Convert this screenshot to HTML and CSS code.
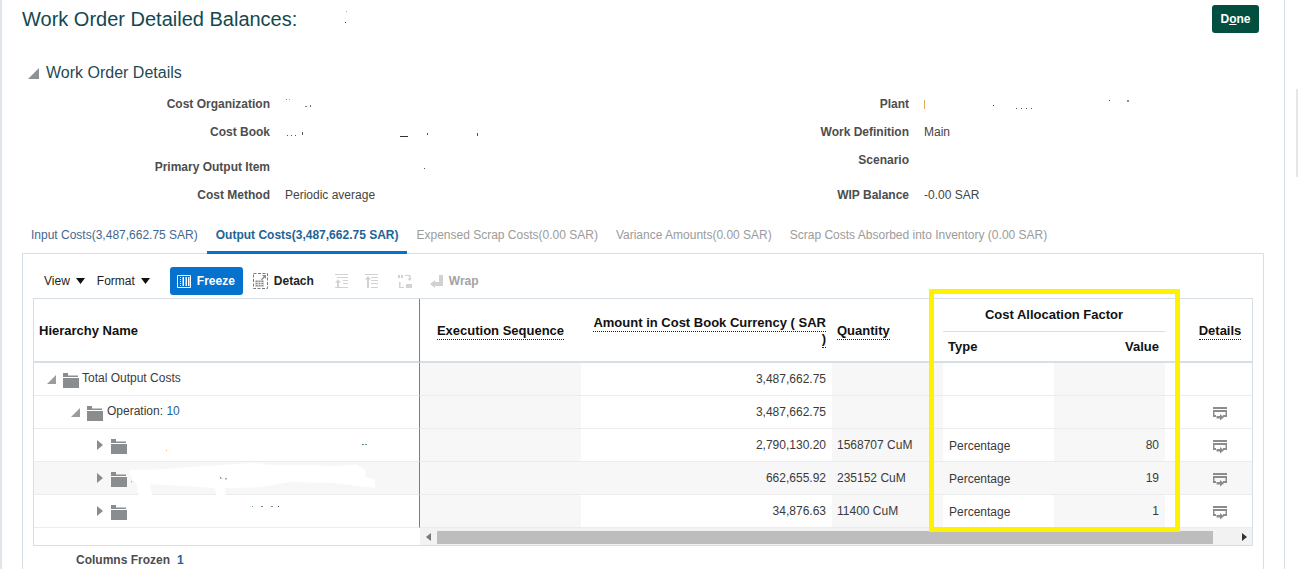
FILE: index.html
```html
<!DOCTYPE html>
<html lang="en">
<head>
<meta charset="utf-8">
<title>Work Order Detailed Balances</title>
<link rel="stylesheet" href="styles.css">
</head>
<body>
<div class="layout">
  <main class="frame">
    <header class="page-head">
      <h1 class="title">Work Order Detailed Balances:<svg class="specks-title" width="4" height="16" viewBox="0 0 4 16"><rect x="2" y="0" width="1" height="1" fill="#c9b36a"/><rect x="1" y="11" width="1" height="1" fill="#445"/></svg></h1>
      <button class="done" type="button">D<u>o</u>ne</button>
    </header>

    <h2 class="section"><svg class="section-tri" width="11" height="11" viewBox="0 0 11 11"><path d="M11 0V11H0Z"/></svg>Work Order Details</h2>

    <section class="form">
      <div class="form-col form-left">
        <div class="row"><span class="label">Cost Organization</span><span class="value"><svg class="speck" width="30" height="12" viewBox="0 0 30 12"><rect x="1" y="1" width="1" height="1" fill="#778"/><rect x="4" y="1" width="1" height="1" fill="#99a"/><rect x="20" y="8" width="2" height="1" fill="#778"/><rect x="25" y="7" width="1" height="2" fill="#667"/></svg></span></div>
        <div class="row"><span class="label">Cost Book</span><span class="value"><svg class="speck" width="200" height="12" viewBox="0 0 200 12"><rect x="2" y="9" width="1" height="1" fill="#556"/><rect x="6" y="9" width="1" height="1" fill="#556"/><rect x="10" y="9" width="1" height="1" fill="#556"/><rect x="17" y="6" width="1" height="3" fill="#556"/><rect x="115" y="10" width="8" height="1" fill="#333"/><rect x="142" y="7" width="1" height="2" fill="#556"/><rect x="192" y="7" width="1" height="3" fill="#357"/></svg></span></div>
        <div class="row row-low"><span class="label">Primary Output Item</span><span class="value"><svg class="speck" width="145" height="12" viewBox="0 0 145 12"><rect x="139" y="7" width="1" height="1" fill="#556"/></svg></span></div>
        <div class="row"><span class="label">Cost Method</span><span class="value">Periodic average</span></div>
      </div>
      <div class="form-col form-right">
        <div class="row"><span class="label">Plant</span><span class="value"><svg class="speck" width="210" height="12" viewBox="0 0 210 12"><rect x="0" y="1" width="1" height="9" fill="#e2a85c"/><rect x="69" y="6" width="1" height="1" fill="#445"/><rect x="92" y="9" width="1" height="1" fill="#556"/><rect x="97" y="9" width="1" height="1" fill="#556"/><rect x="102" y="9" width="1" height="1" fill="#556"/><rect x="107" y="9" width="1" height="1" fill="#556"/><rect x="185" y="1" width="1" height="1" fill="#556"/><rect x="203" y="1" width="2" height="2" fill="#69a"/></svg></span></div>
        <div class="row"><span class="label">Work Definition</span><span class="value">Main</span></div>
        <div class="row row-high"><span class="label">Scenario</span><span class="value"></span></div>
        <div class="row"><span class="label">WIP Balance</span><span class="value">-0.00 SAR</span></div>
      </div>
    </section>

    <nav class="tabs">
      <a class="tab tab-link">Input Costs(3,487,662.75 SAR)</a>
      <a class="tab tab-active">Output Costs(3,487,662.75 SAR)</a>
      <a class="tab">Expensed Scrap Costs(0.00 SAR)</a>
      <a class="tab">Variance Amounts(0.00 SAR)</a>
      <a class="tab">Scrap Costs Absorbed into Inventory (0.00 SAR)</a>
    </nav>

    <section class="panel">
      <div class="toolbar">
        <span class="menu">View<svg class="caret" width="9" height="6" viewBox="0 0 9 6"><path d="M0 0H9L4.500 6Z"/></svg></span>
        <span class="menu menu-format">Format<svg class="caret" width="9" height="6" viewBox="0 0 9 6"><path d="M0 0H9L4.500 6Z"/></svg></span>
        <button class="freeze" type="button">
          <svg width="14" height="13" viewBox="0 0 14 13"><path fill="none" stroke="#fff" d="M.5.500h13v12H.5z"/><path fill="#fff" d="M3 2h1v1H3zM3 4h1v1H3zM3 6h1v1H3zM3 8h1v1H3zM3 10h1v1H3zM5.500 2h1.500v9H5.500zM8.500 2H10v9H8.500zM11 2h1.500v9H11z"/></svg>
          Freeze
        </button>
        <span class="tool tool-detach">
          <svg width="15" height="16" viewBox="0 0 15 16"><path fill="none" stroke="#77797c" stroke-dasharray="3 1.500" d="M.5.500h14v15H.5z"/><path fill="#8a8d90" d="M2.500 7.500h8v6h-8zM9 2h4v4l-1.300-1.500L9 7.200 8 6.200l2.600-2.700z"/><path stroke="#fff" stroke-width=".7" d="M2.500 9.500h8M2.500 11.500h8M5.200 7.500v6M7.900 7.500v6"/></svg>
          Detach
        </span>
        <svg class="dis dis-1" width="13" height="15" viewBox="0 0 13 15"><path fill="#d0d2d4" d="M0 0h13v1H0zM2 3h11v1H2zM8 6h5v1H8zM8 9h5v1H8zM0 13h13v1H0zM3 5.500l3 3H4V13H2V8.500H0z"/></svg>
        <svg class="dis dis-2" width="13" height="15" viewBox="0 0 13 15"><path fill="#d0d2d4" d="M0 0h13v1H0zM6 3h7v1H6zM6 6h7v1H6zM6 9h7v1H6zM6 13h7v1H6zM3 2l3 3.500H4V14H2V5.500H0z"/></svg>
        <svg class="dis dis-3" width="14" height="15" viewBox="0 0 14 15"><path fill="#d0d2d4" d="M0 1h2v3H0zM3 1h2v3H3zM7 1h5v1H7zM11 1h1.500v5H11zM9.500 4.500h4.500L11.700 7zM1 8h1.500v6H1zM1 13h5v1H1zM8 10h6v4H8z"/></svg>
        <svg class="dis dis-4" width="13" height="13" viewBox="0 0 13 13"><path fill="#cfd1d3" d="M9 0h4v11H5v2L0 9l5-4v2h4z"/></svg>
        <span class="tool-wrap">Wrap</span>
      </div>

      <div class="table-area">
        <div class="table-box">
          <table class="grid">
            <colgroup>
              <col class="c-name"><col class="c-seq"><col class="c-amt"><col class="c-qty"><col class="c-type"><col class="c-val"><col class="c-det">
            </colgroup>
            <thead>
              <tr>
                <th rowspan="2" class="h-name frozen">Hierarchy Name</th>
                <th rowspan="2" class="h-center"><span class="dotted">Execution Sequence</span></th>
                <th rowspan="2" class="h-right h-amt"><span class="dotted">Amount in Cost Book Currency ( SAR )</span></th>
                <th rowspan="2" class="h-left"><span class="dotted">Quantity</span></th>
                <th colspan="2" class="h-group">Cost Allocation Factor</th>
                <th rowspan="2" class="h-center"><span class="dotted">Details</span></th>
              </tr>
              <tr>
                <th class="h-left h-sub">Type</th>
                <th class="h-right h-sub">Value</th>
              </tr>
            </thead>
            <tbody>
              <tr>
                <td class="frozen"><div class="tree l1"><svg class="tri-open" width="9" height="9" viewBox="0 0 9 9"><path d="M9 0V9H0Z"/></svg><svg class="folder" width="16" height="15" viewBox="0 0 16 15"><path d="M0 0h5v2.500h10V4H0zM0 5h16v10H0z"/></svg><span>Total Output Costs</span></div></td>
                <td class="shade"></td><td class="num">3,487,662.75</td><td class="shade"></td><td></td><td class="shade"></td><td></td>
              </tr>
              <tr>
                <td class="frozen"><div class="tree l2"><svg class="tri-open" width="9" height="9" viewBox="0 0 9 9"><path d="M9 0V9H0Z"/></svg><svg class="folder" width="16" height="15" viewBox="0 0 16 15"><path d="M0 0h5v2.500h10V4H0zM0 5h16v10H0z"/></svg><span>Operation: <b class="link">10</b></span></div></td>
                <td class="shade"></td><td class="num">3,487,662.75</td><td class="shade"></td><td></td><td class="shade"></td>
                <td class="det"><svg class="det-ico" width="14" height="14" viewBox="0 0 14 14"><path d="M0 0h14v2H0zM0 3h14v7H10V8h2.500V5h-11v3H3v2H0z"/><path d="M3.500 9h3.500V7l4 3.300-4 3.300v-2H3.500z"/></svg></td>
              </tr>
              <tr>
                <td class="frozen"><div class="tree l3"><svg class="tri-closed" width="6" height="10" viewBox="0 0 6 10"><path d="M0 0L6 5L0 10Z"/></svg><svg class="folder" width="16" height="15" viewBox="0 0 16 15"><path d="M0 0h5v2.500h10V4H0zM0 5h16v10H0z"/></svg><svg class="specks-row" width="240" height="33" viewBox="0 0 240 33"><rect x="36" y="21" width="1" height="1" fill="#f0b070"/><rect x="232" y="15" width="2" height="1" fill="#778"/><rect x="235" y="15" width="2" height="1" fill="#69a"/></svg></div></td>
                <td class="shade"></td><td class="num">2,790,130.20</td><td class="shade txt">1568707 CuM</td><td class="txt-type">Percentage</td><td class="shade num">80</td>
                <td class="det"><svg class="det-ico" width="14" height="14" viewBox="0 0 14 14"><path d="M0 0h14v2H0zM0 3h14v7H10V8h2.500V5h-11v3H3v2H0z"/><path d="M3.500 9h3.500V7l4 3.300-4 3.300v-2H3.500z"/></svg></td>
              </tr>
              <tr class="alt">
                <td class="frozen"><div class="tree l3"><svg class="tri-closed" width="6" height="10" viewBox="0 0 6 10"><path d="M0 0L6 5L0 10Z"/></svg><svg class="folder" width="16" height="15" viewBox="0 0 16 15"><path d="M0 0h5v2.500h10V4H0zM0 5h16v10H0z"/></svg></div>
                  <svg class="blob" width="246" height="36" viewBox="90 62 738 108"><path fill="#fff" d="M90 85 160 85 300 75 460 65 520 72 640 72 700 75 770 70 795 85 797 108 825 115 825 140 700 125 570 122 480 138 375 140 378 165 350 165 345 140 150 128 157 165 115 165 110 130 90 100Z"/><rect x="93" y="120" width="3" height="3" fill="#c8901e"/><rect x="360" y="108" width="3" height="3" fill="#503070"/><rect x="364" y="110" width="3" height="3" fill="#9bc"/><rect x="375" y="111" width="6" height="3" fill="#689"/></svg>
                </td>
                <td></td><td class="num">662,655.92</td><td class="txt">235152 CuM</td><td class="txt-type">Percentage</td><td class="num">19</td>
                <td class="det"><svg class="det-ico" width="14" height="14" viewBox="0 0 14 14"><path d="M0 0h14v2H0zM0 3h14v7H10V8h2.500V5h-11v3H3v2H0z"/><path d="M3.500 9h3.500V7l4 3.300-4 3.300v-2H3.500z"/></svg></td>
              </tr>
              <tr>
                <td class="frozen"><div class="tree l3"><svg class="tri-closed" width="6" height="10" viewBox="0 0 6 10"><path d="M0 0L6 5L0 10Z"/></svg><svg class="folder" width="16" height="15" viewBox="0 0 16 15"><path d="M0 0h5v2.500h10V4H0zM0 5h16v10H0z"/></svg><svg class="specks-row" width="240" height="33" viewBox="0 0 240 33"><rect x="122" y="11" width="1" height="1" fill="#69a"/><rect x="131" y="11" width="2" height="1" fill="#689"/><rect x="141" y="11" width="2" height="1" fill="#889"/><rect x="148" y="11" width="1" height="1" fill="#503070"/></svg></div></td>
                <td class="shade"></td><td class="num">34,876.63</td><td class="shade txt">11400 CuM</td><td class="txt-type">Percentage</td><td class="shade num">1</td>
                <td class="det"><svg class="det-ico" width="14" height="14" viewBox="0 0 14 14"><path d="M0 0h14v2H0zM0 3h14v7H10V8h2.500V5h-11v3H3v2H0z"/><path d="M3.500 9h3.500V7l4 3.300-4 3.300v-2H3.500z"/></svg></td>
              </tr>
            </tbody>
          </table>
          <div class="scroll-row">
            <div class="scroll-blank"></div>
            <div class="scroll-track">
              <span class="arrow"><svg width="5" height="8" viewBox="0 0 5 8"><path d="M5 0V8L0 4Z"/></svg></span>
              <span class="thumb"></span>
              <span class="arrow arrow-end"><svg width="5" height="8" viewBox="0 0 5 8"><path d="M0 0V8L5 4Z"/></svg></span>
            </div>
          </div>
        </div>
        <div class="highlight"></div>
      </div>

      <div class="frozen-count"><span class="label">Columns Frozen</span><span class="frozen-num">1</span></div>
    </section>
  </main>
  <aside class="side"><div class="side-box"></div><div class="side-box"></div></aside>
</div>
</body>
</html>
```

FILE: styles.css
```css
* { box-sizing: border-box; }
html, body { margin: 0; padding: 0; height: 569px; overflow: hidden; background: #fff; }
body { font-family: "Liberation Sans", Arial, sans-serif; font-size: 12px; color: #333; }

.layout { display: flex; align-items: flex-start; height: 569px; }
.frame { width: 1285px; height: 569px; border-right: 1px solid #d6dfe6; border-left: 2px solid #dfe5ea; overflow: hidden; flex: none; }
.side { margin: 89px 0 0 11px; width: 2px; flex: none; }
.side-box { height: 44px; border-left: 2px solid #e4e6e8; }

.page-head { display: flex; justify-content: space-between; align-items: flex-start; height: 61px; padding: 5px 25px 0 20px; }
.title { margin: 0; font-size: 20px; font-weight: 400; line-height: 28px; color: #13484f; white-space: nowrap; }
.specks-title { margin-left: 47px; vertical-align: -1px; }
.done { width: 47px; height: 28px; padding: 0; border: 0; border-radius: 3px; background: #024f3f; color: #fff; font: 700 12px "Liberation Sans", Arial, sans-serif; }

.section { display: flex; align-items: center; height: 24px; margin: 0; padding-left: 26px; font-size: 16px; font-weight: 400; color: #1f4a55; }
.section-tri { margin-right: 7px; fill: #8f9294; }

.form { display: flex; height: 119px; margin-top: 5px; }
.form-col { display: flex; flex-direction: column; flex: none; }
.form-left { width: 598px; }
.form-left .label { width: 268px; }
.form-right .label { width: 309px; }
.row { display: flex; height: 28px; line-height: 28px; }
.row-low { height: 36px; align-items: flex-end; }
.row-high { height: 36px; align-items: flex-start; }
.label { flex: none; text-align: right; font-weight: 700; color: #4d4d4d; white-space: nowrap; }
.value { margin-left: 15px; color: #444; white-space: nowrap; }
.speck { display: inline-block; vertical-align: middle; }
.form-left .speck { margin-top: -1px; }

.tabs { position: relative; display: flex; height: 33px; margin: 12px 0 -1px 20px; }
.tab { height: 33px; padding: 0 9px; margin-right: 0; line-height: 28px; color: #9b9b9b; white-space: nowrap; }
.tab-link { color: #44688f; }
.tab-active { border-bottom: 3px solid #0572ce; font-weight: 700; color: #1e6498; }

.panel { margin-left: 20px; width: 1242px; height: 320px; border: 1px solid #d6dfe6; border-bottom: 0; padding: 0 10px; }
.toolbar { display: flex; align-items: center; height: 28px; margin: 13px 0 3px; padding-left: 11px; color: #222; }
.menu { display: flex; align-items: center; gap: 6px; }
.menu-format { margin-left: 12px; }
.caret { fill: #111; }
.freeze { display: flex; align-items: center; gap: 6px; width: 73px; height: 28px; margin-left: 20px; padding: 0 0 0 7px; border: 0; border-radius: 3px; background: #0572ce; color: #fff; font: 700 12px "Liberation Sans", Arial, sans-serif; }
.tool { display: flex; align-items: center; gap: 6px; font-weight: 700; }
.tool-detach { margin-left: 10px; color: #222; }
.dis-1 { margin-left: 21px; }
.dis-2 { margin-left: 17px; }
.dis-3 { margin-left: 20px; }
.dis-4 { margin-left: 18px; }
.tool-wrap { margin-left: 6px; font-weight: 700; color: #a3a3a3; }

.table-area { position: relative; }
.table-box { width: 1220px; height: 248px; border: 1px solid #d6dfe6; overflow: hidden; }
.highlight { position: absolute; left: 896px; top: -9px; width: 251px; height: 243px; border: 5px solid #fff200; pointer-events: none; }

.grid { table-layout: fixed; width: 1241px; border-collapse: separate; border-spacing: 0; }
.c-name { width: 386px; }
.c-seq { width: 161px; }
.c-amt { width: 251px; }
.c-qty { width: 111px; }
.c-type { width: 111px; }
.c-val { width: 111px; }
.c-det { width: 110px; }

.grid th { padding: 0; font-size: 13px; font-weight: 700; line-height: 16px; color: #111; border-bottom: 2px solid #d6dfe6; }
.grid th[rowspan] { padding-top: 2px; }
.grid .h-name { padding-left: 5px; text-align: left; }
.h-center { text-align: center; }
.grid .h-right { padding-right: 6px; text-align: right; }
.grid .h-amt { padding-left: 8px; }
.grid .h-left { padding-left: 5px; text-align: left; }
.grid th.h-group { height: 33px; font-weight: 700; text-align: center; border-bottom: 1px solid #d6dfe6; }
.grid th.h-sub { height: 31px; padding-top: 0; }
.dotted { border-bottom: 1px dotted #222; padding-bottom: 1px; }
.grid th.frozen, .grid td.frozen { border-right: 1px solid #2a9dbb; }

.grid td { position: relative; height: 33px; padding: 0; border-bottom: 1px solid #ececec; white-space: nowrap; color: #3a3a3a; }
.shade { background: #f7f7f7; }
.alt td { background: #f7f7f7; }
.grid .num { padding-right: 6px; text-align: right; }
.grid .txt { padding-left: 5px; }
.grid .txt-type { padding: 2px 0 0 6px; background: #fff; }
.grid .alt .txt-type { background: #f7f7f7; }
.grid .det { padding-left: 48px; }
.det-ico { display: block; margin-top: 3px; fill: #8a8d90; }

.tree { display: flex; align-items: center; height: 32px; color: #3a3a3a; }
.tree span { margin: -3px 0 0 3px; }
.l2 span { margin-left: 4px; }
.l1 { padding-left: 13px; }
.l2 { padding-left: 37px; }
.l3 { padding-left: 63px; }
.tri-open { margin-right: 7px; fill: #9a9c9e; }
.tri-closed { margin-right: 8px; fill: #8a8d90; }
.folder { fill: #8a8d90; flex: none; margin-top: 2px; }
.specks-row { margin-left: 3px; }
.link { font-weight: 400; color: #1e6498; }
.blob { position: absolute; left: 96px; top: 0; }

.scroll-row { display: flex; height: 18px; }
.scroll-blank { width: 386px; flex: none; }
.scroll-track { display: flex; align-items: center; flex: 1; background: #f2f2f2; }
.arrow { display: flex; justify-content: center; width: 17px; flex: none; fill: #777; }
.arrow-end { margin-left: auto; width: 16px; fill: #333; }
.thumb { width: 776px; height: 13px; background: #bdbdbd; flex: none; }

.frozen-count { display: flex; gap: 7px; margin-top: 5px; padding-left: 43px; line-height: 18px; }
.frozen-num { font-weight: 700; color: #1e6498; }
```
